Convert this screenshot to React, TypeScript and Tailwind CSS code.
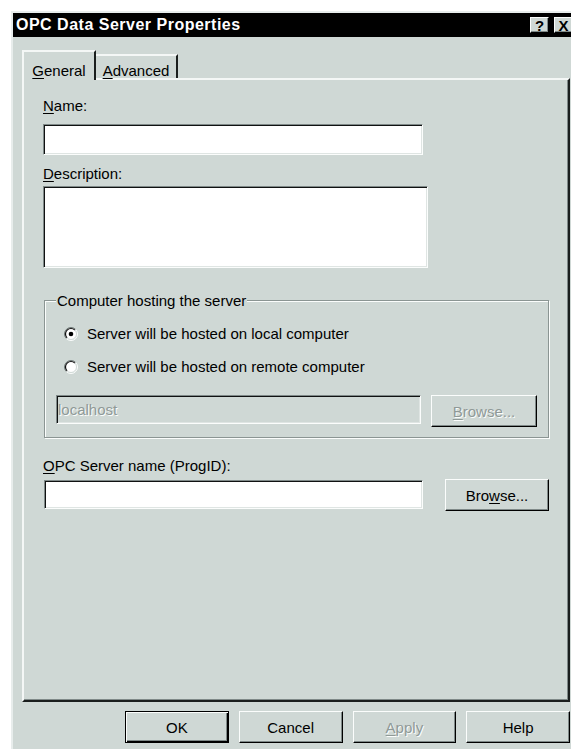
import React from 'react';
import clsx from 'clsx';

// classic 3D chrome colours
const FACE = 'bg-[#cfd8d5]';
const DIM = 'text-[#8f9997] [text-shadow:1px_1px_0_#fbfdfc]';

function Key({ text, at }: { text: string; at: number }) {
  return (
    <>
      {text.slice(0, at)}
      <u className="underline-offset-[2px]">{text[at]}</u>
      {text.slice(at + 1)}
    </>
  );
}

function Label({ children, className }: { children: React.ReactNode; className?: string }) {
  return <div className={clsx('text-[15px] leading-[17px]', className)}>{children}</div>;
}

function Field({ className, children }: { className?: string; children?: React.ReactNode }) {
  return (
    <div
      className={clsx(
        'flex items-center border border-t-[#7f8988] border-l-[#7f8988] border-r-[#fbfdfc] border-b-[#fbfdfc] shadow-[inset_1px_1px_0_#101212,inset_-1px_-1px_0_#dfe5e3] text-[15px] leading-[17px]',
        className,
      )}
    >
      {children}
    </div>
  );
}

function PushButton({
  children,
  isDefault,
  disabled,
  className,
}: {
  children: React.ReactNode;
  isDefault?: boolean;
  disabled?: boolean;
  className?: string;
}) {
  return (
    <button
      type="button"
      className={clsx(
        'flex items-center justify-center text-[15px] leading-[17px]',
        FACE,
        isDefault
          ? 'border border-black shadow-[inset_1px_1px_0_#fbfdfc,inset_-1px_-1px_0_#000,inset_-2px_-2px_0_#7f8988]'
          : 'border border-t-[#fbfdfc] border-l-[#fbfdfc] border-r-black border-b-black shadow-[inset_-1px_-1px_0_#7f8988]',
        disabled ? DIM : 'text-black',
        className,
      )}
    >
      {children}
    </button>
  );
}

function Radio({ checked, label }: { checked?: boolean; label: string }) {
  return (
    <div className="flex items-center gap-[9px] h-[17px] ml-[8px]">
      <svg width="14" height="14" viewBox="0 0 14 14">
        <circle cx="7" cy="7" r="6" fill="#fff" />
        <path d="M2.4 11.6 A6.5 6.5 0 0 1 11.6 2.4" fill="none" stroke="#6f7977" strokeWidth="1" />
        <path d="M11.6 2.4 A6.5 6.5 0 0 1 2.4 11.6" fill="none" stroke="#fbfdfc" strokeWidth="1" />
        <path d="M3.1 10.9 A5.5 5.5 0 0 1 10.9 3.1" fill="none" stroke="#111" strokeWidth="1.2" />
        <path d="M10.9 3.1 A5.5 5.5 0 0 1 3.1 10.9" fill="none" stroke="#cfd8d5" strokeWidth="1" />
        {checked && <circle cx="7" cy="7" r="2.3" fill="#000" />}
      </svg>
      <span className="text-[15px] leading-[17px]">{label}</span>
    </div>
  );
}

function CaptionButton({ glyph }: { glyph: string }) {
  return (
    <div
      className={clsx(
        'w-[19px] h-[16px] flex items-center justify-center text-[15px] font-bold leading-none text-black border border-t-[#fbfdfc] border-l-[#fbfdfc] border-r-black border-b-black shadow-[inset_-1px_-1px_0_#7f8988]',
        FACE,
      )}
    >
      {glyph}
    </div>
  );
}

export default function App() {
  return (
    <div className="w-[571px] h-[749px] overflow-hidden bg-white pt-[11px] pl-[11px] font-['Liberation_Sans',Arial,sans-serif] text-black">
      <div className={clsx('w-[566px] h-[760px] flex flex-col border-t-2 border-l-2 border-[#e8edec]', FACE)}>
        {/* caption */}
        <div className="h-[24px] shrink-0 bg-black flex items-center justify-between pl-[3px] pr-[4px]">
          <span className="text-white font-bold text-[16px] tracking-[0.5px] leading-none">
            OPC Data Server Properties
          </span>
          <div className="flex gap-[5px]">
            <CaptionButton glyph="?" />
            <CaptionButton glyph="X" />
          </div>
        </div>

        <div className="flex-1 pt-[13px] pl-[9px] pr-[7px]">
          {/* tabs */}
          <div className="flex items-end h-[28px]">
            <div
              className={clsx(
                'relative z-10 -mb-[2px] h-[30px] w-[74px] pt-[10px] text-center text-[15px] leading-[17px] border-t-2 border-l-2 border-r-2 border-t-[#f4f7f6] border-l-[#f4f7f6] border-r-[#1a1e1d]',
                FACE,
              )}
            >
              <Key text="General" at={0} />
            </div>
            <div className="h-[24px] w-[82px] pt-[6px] text-center text-[15px] leading-[17px] border-t-2 border-r-2 border-t-[#f4f7f6] border-r-[#1a1e1d]">
              <Key text="Advanced" at={0} />
            </div>
          </div>

          {/* General page */}
          <div className="h-[624px] border-2 border-t-[#f4f7f6] border-l-[#f4f7f6] border-r-[#1a1e1d] border-b-[#1a1e1d] shadow-[inset_-1px_-1px_0_#7f8988] pl-[19px] pt-[17px]">
            <Label>
              <Key text="Name:" at={0} />
            </Label>
            <Field className="mt-[10px] w-[380px] h-[31px] bg-white" />
            <Label className="mt-[10px]">
              <Key text="Description:" at={0} />
            </Label>
            <Field className="mt-[4px] w-[385px] h-[82px] bg-white" />

            <fieldset className="mt-[24px] ml-[1px] w-[505px] pl-[11px] pb-[10px] border border-[#8b9593] shadow-[inset_1px_1px_0_#fbfdfc,1px_1px_0_#fbfdfc]">
              <legend className={clsx('px-[1px] text-[15px] leading-[17px]', FACE)}>
                Computer hosting the server
              </legend>
              <div className="mt-[16px]">
                <Radio checked label="Server will be hosted on local computer" />
              </div>
              <div className="mt-[16px]">
                <Radio label="Server will be hosted on remote computer" />
              </div>
              <div className="mt-[20px] flex items-start gap-[10px]">
                <Field className={clsx('w-[365px] h-[29px] pl-[1px]', DIM)}>localhost</Field>
                <PushButton disabled className="w-[106px] h-[32px]">
                  <Key text="Browse..." at={0} />
                </PushButton>
              </div>
            </fieldset>

            <Label className="mt-[19px]">
              <Key text="OPC Server name (ProgID):" at={0} />
            </Label>
            <div className="mt-[6px] ml-[1px] flex items-start gap-[22px]">
              <Field className="w-[379px] h-[29px] bg-white" />
              <PushButton className="-mt-[1px] w-[104px] h-[32px]">
                <Key text="Browse..." at={3} />
              </PushButton>
            </div>
          </div>

          {/* dialog buttons */}
          <div className="mt-[9px] ml-[103px] flex gap-[10px]">
            <PushButton isDefault className="w-[104px] h-[32px]">
              OK
            </PushButton>
            <PushButton className="w-[104px] h-[32px]">Cancel</PushButton>
            <PushButton disabled className="w-[104px] h-[32px]">
              <Key text="Apply" at={0} />
            </PushButton>
            <PushButton className="w-[104px] h-[32px]">Help</PushButton>
          </div>
        </div>
      </div>
    </div>
  );
}
